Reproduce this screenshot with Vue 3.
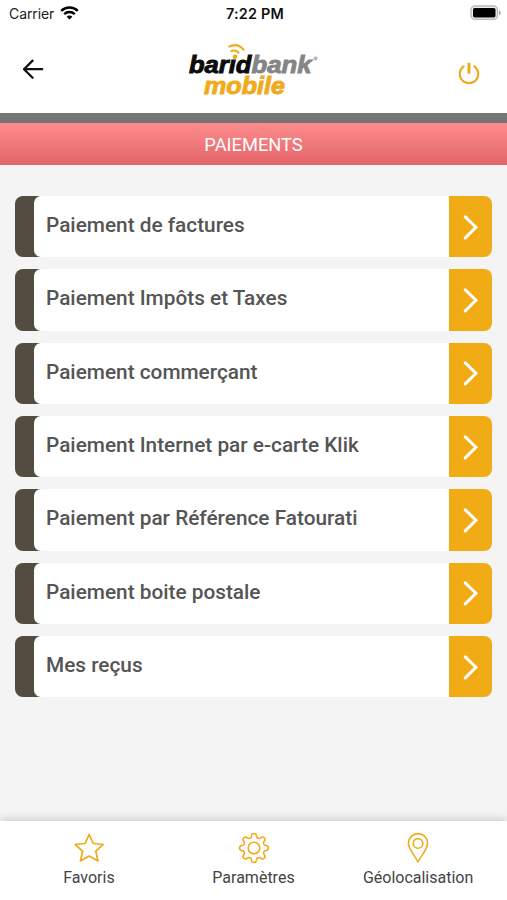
<template>
  <div class="screen">
    <div class="status-bar">
      <div class="carrier">
        <span>Carrier</span>
        <svg class="wifi" width="19" height="14" viewBox="0 0 19 14" fill="none" stroke="#000" stroke-width="2.5">
          <path d="M1.2 4.8C6 .3 13 .3 17.8 4.8" />
          <path d="M4.2 8.1c3-2.8 7.6-2.8 10.6 0" />
          <path d="M9.5 13.6 6.6 10.7c1.6-1.5 4.2-1.5 5.8 0z" fill="#000" stroke="none" />
        </svg>
      </div>
      <span class="time">7:22 PM</span>
      <svg class="battery" width="32" height="16" viewBox="0 0 32 16">
        <rect x="1" y="1" width="26.5" height="13.4" rx="4" fill="#eee" stroke="#b8b8b8" stroke-width="1.4" />
        <rect x="3" y="3" width="22.5" height="9.4" rx="1.6" fill="#000" />
        <path d="M29 5.2c2.2.9 2.2 4.1 0 5z" fill="#a8a8a8" />
      </svg>
    </div>

    <header class="header">
      <button class="icon-btn">
        <svg width="22" height="22" viewBox="0 0 22 22" fill="none" stroke="#111" stroke-width="2.3" stroke-linecap="round" stroke-linejoin="round">
          <path d="M20.2 11.2H2M10.6 2.6 2 11.2l8.6 8.5" />
        </svg>
      </button>
      <svg class="logo" width="134" height="60" viewBox="0 0 134 60">
        <text class="logo-text" x="1" y="34" textLength="62.5" lengthAdjust="spacingAndGlyphs" fill="#0b0b0b" stroke="#0b0b0b">barıd</text>
        <text class="logo-text" x="63.5" y="34" textLength="60" lengthAdjust="spacingAndGlyphs" fill="#858585" stroke="#858585">bank</text>
        <text class="logo-text" x="16" y="54.5" textLength="81" lengthAdjust="spacingAndGlyphs" fill="#efab1a" stroke="#efab1a">mobile</text>
        <circle cx="47" cy="17.8" r="2.4" fill="#efab1a" />
        <path d="M42.6 12.4q5.4-2.4 8.4 2M40.4 7.9q9.6-4.8 15.6 3.4" fill="none" stroke="#efab1a" stroke-width="2" />
        <circle cx="127.6" cy="19.4" r="1.7" fill="#bbb" stroke="#aaa" stroke-width=".6" />
      </svg>
      <button class="icon-btn">
        <svg width="24" height="24" viewBox="0 0 24 24" fill="none" stroke="#efa920" stroke-width="2.1">
          <path d="M7.4 4.8a9.3 9.3 0 1 0 9.2 0" />
          <path d="M12 1.8v10.8" stroke-width="3" />
        </svg>
      </button>
    </header>

    <div class="divider"></div>
    <h1 class="title">PAIEMENTS</h1>

    <main class="menu">
      <div v-for="item in items" :key="item" class="menu-item">
        <div class="edge">
          <div class="label">{{ item }}</div>
        </div>
        <div class="arrow">
          <svg width="16" height="26" viewBox="0 0 16 26" fill="none" stroke="#fff" stroke-width="3" stroke-linecap="round">
            <path d="M2.3 2.9 12.9 13.3 2.3 23.9" />
          </svg>
        </div>
      </div>
    </main>

    <nav class="tab-bar">
      <div class="tab">
        <svg width="32" height="32" viewBox="0 0 32 32" fill="none" stroke="#f0aa1c" stroke-width="1.7" stroke-linejoin="round">
          <path d="M16.2 2.4 20.3 11.5 30.2 12.5 22.8 19.2 25 29 16.2 24 7.4 29 9.6 19.2 2.2 12.5 12.1 11.5z" />
        </svg>
        <span>Favoris</span>
      </div>
      <div class="tab">
        <svg width="32" height="32" viewBox="0 0 32 32" fill="none" stroke="#f0aa1c" stroke-width="1.6" stroke-linejoin="round">
          <path :d="gearPath" />
          <circle cx="16" cy="16" r="5.8" />
        </svg>
        <span>Paramètres</span>
      </div>
      <div class="tab">
        <svg width="32" height="32" viewBox="0 0 32 32" fill="none" stroke="#f0aa1c" stroke-width="1.6" stroke-linejoin="round">
          <path d="M16 30C12.8 23.6 6.4 17 6.4 11.2a9.6 9.6 0 0 1 19.2 0C25.6 17 19.2 23.6 16 30z" />
          <circle cx="16" cy="11.4" r="4.8" />
        </svg>
        <span>Géolocalisation</span>
      </div>
    </nav>
  </div>
</template>

<script setup>
const items = [
  'Paiement de factures',
  'Paiement Impôts et Taxes',
  'Paiement commerçant',
  'Paiement Internet par e-carte Klik',
  'Paiement par Référence Fatourati',
  'Paiement boite postale',
  'Mes reçus'
];

// gear outline with 8 rounded teeth
const buildGear = () => {
  const points = [];
  for (let i = 0; i < 160; i++) {
    const angle = (i / 160) * Math.PI * 2;
    const r = 12.5 + 1.9 * Math.tanh(Math.cos(angle * 8) * 2);
    points.push(`${(16 + r * Math.cos(angle)).toFixed(2)} ${(16 + r * Math.sin(angle)).toFixed(2)}`);
  }
  return `M${points.join('L')}z`;
};
const gearPath = buildGear();
</script>

<style>
body {
  margin: 0;
}
</style>

<style scoped>
.screen {
  display: flex;
  flex-direction: column;
  width: 507px;
  height: 900px;
  overflow: hidden;
  background: #f4f4f4;
  font-family: Roboto, "Liberation Sans", sans-serif;
}

.status-bar {
  display: grid;
  grid-template-columns: 1fr auto 1fr;
  align-items: center;
  height: 27px;
  padding: 0 5px 0 9px;
  background: #fff;
  font-family: Inter, "Liberation Sans", sans-serif;
  font-size: 14px;
  color: #222;
}

.carrier {
  display: flex;
  align-items: center;
  gap: 6px;
  letter-spacing: -0.1px;
}

.wifi {
  margin-top: -2px;
}

.time {
  margin-right: 1px;
  font-size: 14.4px;
  font-weight: 600;
  letter-spacing: 0.2px;
  color: #111;
}

.battery {
  justify-self: end;
  margin-top: -1px;
}

.header {
  display: flex;
  align-items: center;
  justify-content: space-between;
  height: 86px;
  padding: 0 26px 0 22px;
  background: #fff;
}

.icon-btn {
  display: flex;
  padding: 0;
  border: none;
  background: none;
}

.icon-btn:first-child {
  margin-top: -2px;
  margin-right: 2px;
}

.icon-btn:last-child {
  margin-top: 5px;
}

.logo {
  margin-top: -2px;
  margin-left: 7px;
}

.logo-text {
  font-family: "Liberation Sans", Arial, sans-serif;
  font-size: 23.5px;
  font-weight: 700;
  font-style: italic;
  stroke-width: 0.9px;
}

.divider {
  height: 9.7px;
  background: #757575;
}

.title {
  height: 42.8px;
  margin: 0;
  background: linear-gradient(#fd8d8d, #e26469);
  color: #fff;
  font-size: 18.3px;
  font-weight: 400;
  line-height: 43px;
  text-align: center;
}

.menu {
  display: flex;
  flex: 1;
  flex-direction: column;
  gap: 12px;
  padding: 30.7px 15px 0 15.4px;
}

.menu-item {
  display: flex;
  height: 61.3px;
}

.edge {
  flex: 1;
  padding-left: 18.6px;
  border-radius: 8px 0 0 8px;
  background: #534c41;
}

.label {
  height: 100%;
  padding-left: 12px;
  border-radius: 7px 0 0 7px;
  background: #fff;
  color: #555;
  font-size: 20.8px;
  font-weight: 500;
  line-height: 58px;
}

.arrow {
  display: flex;
  align-items: center;
  justify-content: center;
  width: 43px;
  border-radius: 0 8px 8px 0;
  background: #f0ab15;
}

.tab-bar {
  display: flex;
  justify-content: center;
  height: 79px;
  background: #fff;
  box-shadow: 0 -1px 9px rgba(0, 0, 0, 0.2);
}

.tab {
  display: flex;
  flex-direction: column;
  align-items: center;
  width: 164.6px;
  padding-top: 10.5px;
  color: #444;
  font-size: 16px;
  line-height: 28px;
}
</style>
